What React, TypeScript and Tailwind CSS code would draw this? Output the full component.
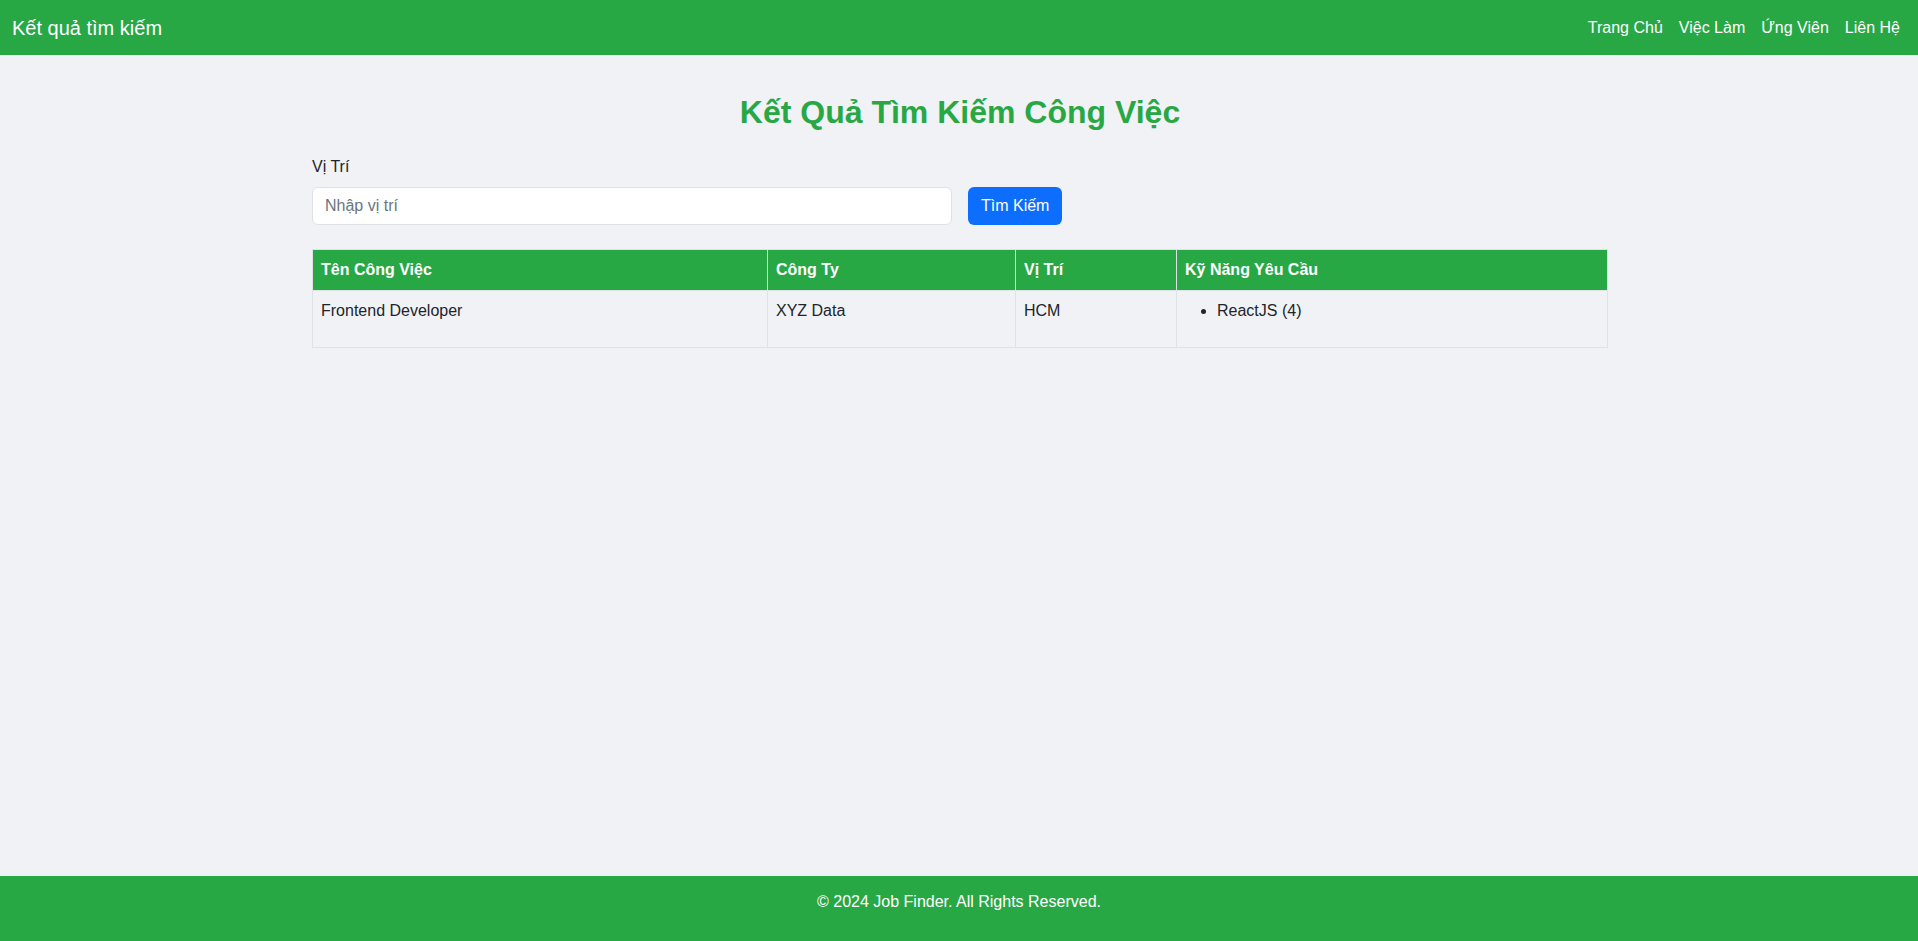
import React from "react";

export default function App() {
  return (
    <div className="min-h-screen flex flex-col bg-[#f1f2f5] text-[#212529] font-['Liberation_Sans',Arial,sans-serif] text-base">
      <header className="h-[55px] bg-[#28a745] flex items-center justify-between pl-3 pr-[18px] text-white">
        <div className="text-[20px] leading-[30px]">Kết quả tìm kiếm</div>
        <nav className="flex gap-4 text-base leading-6">
          <a href="#">Trang Chủ</a>
          <a href="#">Việc Làm</a>
          <a href="#">Ứng Viên</a>
          <a href="#">Liên Hệ</a>
        </nav>
      </header>

      <main className="flex-1">
        <div className="max-w-[1320px] mx-auto pl-[13px] pr-[11px] pt-[38px]">
          <h1 className="text-center text-[32px] leading-[38px] font-bold text-[#28a745] mb-[24px]">
            Kết Quả Tìm Kiếm Công Việc
          </h1>
          <label className="block leading-6 mb-2">Vị Trí</label>
          <div className="flex items-center gap-4">
            <input
              type="text"
              placeholder="Nhập vị trí"
              className="w-[640px] h-[38px] bg-white border border-[#dee2e6] rounded-md px-3 text-base placeholder:text-[#6c757d] outline-none"
            />
            <button className="h-[38px] px-[13px] rounded-md bg-[#0d6efd] text-white text-base">
              Tìm Kiếm
            </button>
          </div>

          <table className="mt-6 w-full border-collapse border border-[#dee2e6] text-left">
            <thead>
              <tr className="bg-[#28a745] text-white">
                <th className="w-[455px] p-2 font-bold leading-6 border border-[#dee2e6]">Tên Công Việc</th>
                <th className="w-[248px] p-2 font-bold leading-6 border border-[#dee2e6]">Công Ty</th>
                <th className="w-[161px] p-2 font-bold leading-6 border border-[#dee2e6]">Vị Trí</th>
                <th className="p-2 font-bold leading-6 border border-[#dee2e6]">Kỹ Năng Yêu Cầu</th>
              </tr>
            </thead>
            <tbody>
              <tr>
                <td className="p-2 align-top leading-6 border border-[#dee2e6]">Frontend Developer</td>
                <td className="p-2 align-top leading-6 border border-[#dee2e6]">XYZ Data</td>
                <td className="p-2 align-top leading-6 border border-[#dee2e6]">HCM</td>
                <td className="p-2 align-top leading-6 border border-[#dee2e6]">
                  <ul className="list-disc pl-8 mb-4">
                    <li>ReactJS (4)</li>
                  </ul>
                </td>
              </tr>
            </tbody>
          </table>
        </div>
      </main>

      <footer className="h-[65px] bg-[#28a745] text-white text-center pt-[14px]">
        <p className="leading-6">© 2024 Job Finder. All Rights Reserved.</p>
      </footer>
    </div>
  );
}
